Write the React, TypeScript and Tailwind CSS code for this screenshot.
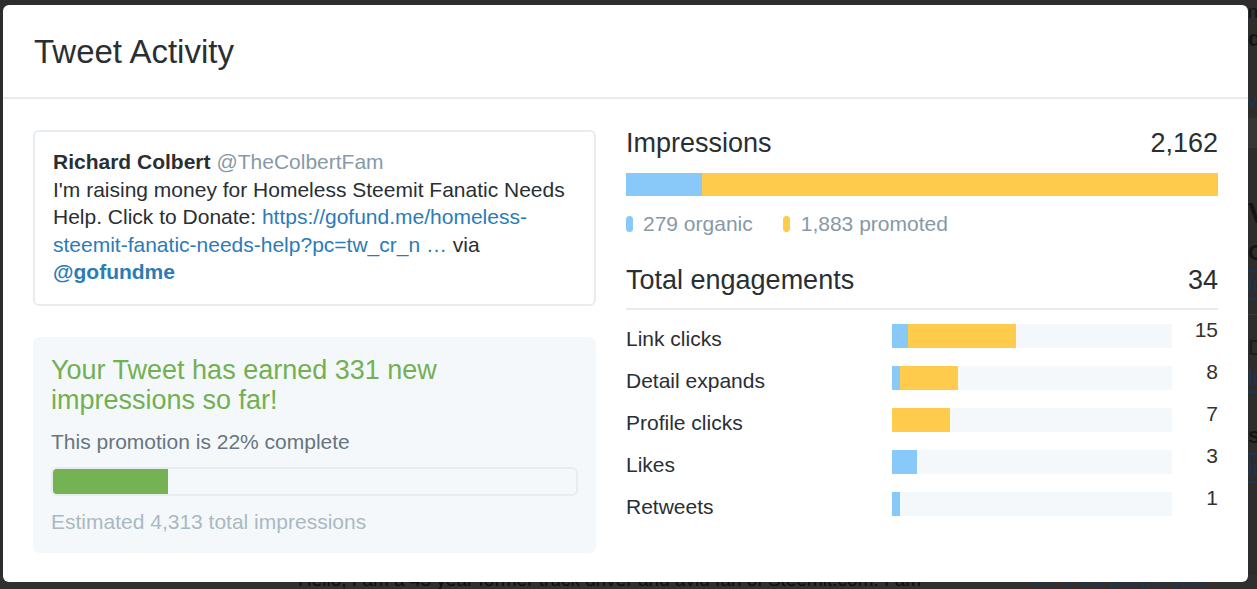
const font = "font-['Liberation_Sans',Arial,sans-serif]";

const engagements = [
  { label: "Link clicks", organic: 2, promoted: 13, total: 15 },
  { label: "Detail expands", organic: 1, promoted: 7, total: 8 },
  { label: "Profile clicks", organic: 0, promoted: 7, total: 7 },
  { label: "Likes", organic: 3, promoted: 0, total: 3 },
  { label: "Retweets", organic: 1, promoted: 0, total: 1 },
];
const TOTAL = 34;

function TweetCard() {
  return (
    <div className="rounded-md border-2 border-[#e6ecf0] px-[18px] pt-[16px] pb-[18px] text-[21px] leading-[27.5px] text-[#292f33]">
      <div>
        <span className="font-bold">Richard Colbert</span>{" "}
        <span className="text-[#8899a6]">@TheColbertFam</span>
      </div>
      <p>
        I'm raising money for Homeless Steemit Fanatic Needs
        <br />
        Help. Click to Donate:{" "}
        <a className="text-[#2b7bb9]" href="#">
          https://gofund.me/homeless-
          <br />
          steemit-fanatic-needs-help?pc=tw_cr_n …
        </a>{" "}
        via
        <br />
        <a className="font-bold text-[#2b7bb9]" href="#">
          @gofundme
        </a>
      </p>
    </div>
  );
}

function Promotion() {
  return (
    <div className="mt-[31px] rounded-md bg-[#f5f8fa] px-[18px] pt-[18px] pb-[18px]">
      <h3 className="text-[27px] leading-[30px] text-[#72b052]">
        Your Tweet has earned 331 new
        <br />
        impressions so far!
      </h3>
      <p className="mt-[13px] text-[21px] leading-[27px] text-[#66757f]">
        This promotion is 22% complete
      </p>
      <div className="mt-[12px] h-[29px] rounded-md border-2 border-[#e6ecf0] bg-[#f5f8fa] overflow-hidden">
        <div className="h-full w-[22%] bg-[#74b254]" />
      </div>
      <p className="mt-[12px] text-[21px] leading-[27px] text-[#aab8c2]">
        Estimated 4,313 total impressions
      </p>
    </div>
  );
}

function Stats() {
  return (
    <div className="w-[592px] text-[#292f33]">
      <div className="flex justify-between text-[27px] leading-[27px]">
        <span>Impressions</span>
        <span>2,162</span>
      </div>
      <div className="mt-[16px] flex h-[23px]">
        <div className="h-full bg-[#88c9f9]" style={{ width: `${(279 / 2162) * 100}%` }} />
        <div className="h-full flex-1 bg-[#ffcb4c]" />
      </div>
      <div className="mt-[14px] flex items-center text-[21px] leading-[27.5px] text-[#8899a6]">
        <span className="mr-[10px] h-[16px] w-[7px] rounded-full bg-[#88c9f9]" />
        <span>279 organic</span>
        <span className="ml-[30px] mr-[11px] h-[16px] w-[7px] rounded-full bg-[#ffcb4c]" />
        <span>1,883 promoted</span>
      </div>

      <div className="mt-[29px] flex justify-between border-b-2 border-[#e6ecf0] pb-[14px] text-[27px] leading-[27px]">
        <span>Total engagements</span>
        <span>34</span>
      </div>

      <div className="mt-[14px]">
        {engagements.map((e) => (
          <div key={e.label} className="flex h-[42px] items-start text-[21px] leading-[27.5px]">
            <span className="mt-[1px] w-[266px]">{e.label}</span>
            <div className="flex h-[24px] w-[280px] bg-[#f5f8fa]">
              <div className="h-full bg-[#88c9f9]" style={{ width: `${(e.organic / TOTAL) * 100}%` }} />
              <div className="h-full bg-[#ffcb4c]" style={{ width: `${(e.promoted / TOTAL) * 100}%` }} />
            </div>
            <span className="-mt-[8px] flex-1 text-right text-[#333]">{e.total}</span>
          </div>
        ))}
      </div>
    </div>
  );
}

function BackgroundPage() {
  return (
    <div className="flex h-full flex-col bg-[#2d2d2d]">
      {/* bits of the page behind the overlay, right edge */}
      <div className="ml-[1248px] flex flex-col text-[22px] leading-[26px] text-[#141414]">
        <span className="mt-[2px] text-[18px] leading-[20px] text-[#121212]">n</span>
        <span className="mt-[4px] font-bold">d</span>
        <span className="mt-[36px] text-[18px] text-[#1b3550]">ve</span>
        <div className="mt-[4px] h-[30px] bg-[#363636]" />
        <span className="mt-[52px] text-[30px] font-bold">V</span>
        <span className="mt-[14px] font-bold">Ou</span>
        <div className="mt-[4px] h-[2px] bg-[#1b3550]" />
        <span className="text-[#1b3550]">lo</span>
        <div className="h-[2px] bg-[#1b3550]" />
        <div className="mt-[14px] h-[1px] bg-[#3a3a3a]" />
        <span className="mt-[20px] text-[#1b1b1b]">D</span>
        <span className="mt-[4px] text-[#1b3550]">lo</span>
        <div className="h-[2px] bg-[#1b3550]" />
        <span className="mt-[30px] font-bold">s</span>
        <div className="mt-[4px] h-[2px] bg-[#1b3550]" />
        <span className="text-[#1b3550]">lo</span>
        <div className="h-[2px] bg-[#1b3550]" />
      </div>
      <div className="mt-auto flex h-[14px] items-start bg-[#303030] pl-[298px] text-[19px] leading-[14px] text-[#0d0d0d]">
        <span className="-mt-[2px]">Hello, I am a 45 year former truck driver and avid fan of Steemit.com. I am</span>
        <span className="ml-[110px] -mt-[2px] text-[#1b3550]">08&nbsp;&nbsp;&nbsp;Find people you</span>
      </div>
    </div>
  );
}

export default function App() {
  return (
    <div className={`relative h-[589px] w-[1257px] overflow-hidden ${font}`}>
      <BackgroundPage />

      {/* Modal */}
      <div className="absolute left-[3px] top-[5px] h-[577px] w-[1245px] rounded-md bg-white">
        <div className="flex h-[94px] items-center border-b-2 border-[#e6ecf0] px-[31px]">
          <h2 className="text-[33px] leading-none text-[#292f33]">Tweet Activity</h2>
        </div>
        <div className="flex gap-[30px] px-[30px] pt-[31px]">
          <div className="w-[563px]">
            <TweetCard />
            <Promotion />
          </div>
          <Stats />
        </div>
      </div>
    </div>
  );
}
